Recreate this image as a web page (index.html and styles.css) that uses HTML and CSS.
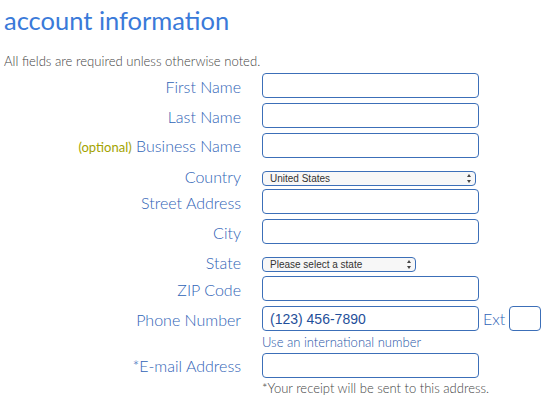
FILE: index.html
```html
<!DOCTYPE html>
<html>
<head>
<meta charset="utf-8">
<link rel="stylesheet" href="styles.css">
</head>
<body>
<div class="page">
  <h1 class="title">account information</h1>
  <p class="intro">All fields are required unless otherwise noted.</p>
  <form class="form">
    <div class="row">
      <label class="label">First Name</label>
      <div class="field"><input class="input" type="text"></div>
    </div>
    <div class="row">
      <label class="label">Last Name</label>
      <div class="field"><input class="input" type="text"></div>
    </div>
    <div class="row">
      <label class="label"><span class="optional">(optional)</span> Business Name</label>
      <div class="field"><input class="input" type="text"></div>
    </div>
    <div class="row row-select">
      <label class="label">Country</label>
      <div class="field"><div class="select select-wide"><span>United States</span><span class="arrows"></span></div></div>
    </div>
    <div class="row row-after-select">
      <label class="label">Street Address</label>
      <div class="field"><input class="input" type="text"></div>
    </div>
    <div class="row">
      <label class="label">City</label>
      <div class="field"><input class="input" type="text"></div>
    </div>
    <div class="row row-select">
      <label class="label">State</label>
      <div class="field"><div class="select select-narrow"><span>Please select a state</span><span class="arrows"></span></div></div>
    </div>
    <div class="row row-after-select2">
      <label class="label">ZIP Code</label>
      <div class="field"><input class="input" type="text"></div>
    </div>
    <div class="row">
      <label class="label">Phone Number</label>
      <div class="field phone">
        <input class="input phone-input" type="text" value="(123) 456-7890">
        <span class="ext">Ext</span>
        <input class="input ext-input" type="text">
      </div>
    </div>
    <div class="row row-help">
      <span class="label"></span>
      <div class="field"><a class="help">Use an international number</a></div>
    </div>
    <div class="row row-email">
      <label class="label">*E-mail Address</label>
      <div class="field"><input class="input" type="text"></div>
    </div>
    <div class="row row-note">
      <span class="label"></span>
      <div class="field"><span class="note">*Your receipt will be sent to this address.</span></div>
    </div>
  </form>
</div>
</body>
</html>
```

FILE: styles.css
```css
* { box-sizing: border-box; }
html, body { margin: 0; padding: 0; background: #fff; }
body { font-family: Lato, "Open Sans", sans-serif; }
.page { padding: 0 4px; }
.title {
  margin: 0;
  padding-top: 3px;
  font-size: 25.5px;
  line-height: 34px;
  font-weight: 400;
  color: #3a7ad9;
}
.intro {
  margin: 16px 0 0 0;
  font-size: 13.1px;
  line-height: 16px;
  color: #444;
  font-weight: 300;
}
.form { display: flex; flex-direction: column; margin-top: 4px; }
.row { display: flex; align-items: center; height: 25px; margin-top: 5px; }
.row:first-child { margin-top: 0; }
.label {
  width: 237px;
  flex: none;
  text-align: right;
  font-size: 16px;
  line-height: 20px;
  font-weight: 300;
  color: #2f63b6;
  padding-top: 2px;
}
.optional { font-size: 13px; color: #a3a300; font-weight: 400; }
.field { margin-left: 21px; display: flex; align-items: center; }
.input {
  width: 217px;
  height: 25px;
  border: 1px solid #3c6fb8;
  border-radius: 4px;
  padding: 0 6px;
  font-family: "Liberation Sans", Arial, sans-serif;
  font-size: 14px;
  color: #1f4f9a;
  background: #fff;
  outline: none;
}
.row-select { height: 15px; margin-top: 13px; }
.row-select .label { padding-top: 0; margin-top: -4px; }
.row-after-select { margin-top: 3px; }
.row-after-select2 { margin-top: 4px; }
.select {
  height: 15px;
  border: 1px solid #3c6fb8;
  border-radius: 4px;
  background: #f7f7f7;
  font-family: "Liberation Sans", Arial, sans-serif;
  font-size: 10px;
  color: #333;
  display: flex;
  align-items: center;
  justify-content: space-between;
  padding: 0 3px 0 7px;
}
.select-wide { width: 214px; }
.select-narrow { width: 154px; }
.arrows {
  width: 5px;
  height: 9px;
  position: relative;
}
.arrows::before, .arrows::after {
  content: "";
  position: absolute;
  left: 0;
  border-left: 2.5px solid transparent;
  border-right: 2.5px solid transparent;
}
.arrows::before { top: 0; border-bottom: 3px solid #444; }
.arrows::after { bottom: 0; border-top: 3px solid #444; }
.phone-input { padding-left: 7px; }
.ext { font-size: 16px; font-weight: 300; color: #2f63b6; margin-left: 4px; width: 26px; }
.ext-input { width: 32px; }
.row-help { height: 14px; margin-top: 4px; }
.help { font-size: 13px; line-height: 14px; color: #1f56a8; font-weight: 300; }
.row-email { height: 24px; margin-top: 4px; }
.row-note { height: 16px; margin-top: 3px; }
.note { font-size: 13px; line-height: 16px; color: #444; font-weight: 300; }
```
